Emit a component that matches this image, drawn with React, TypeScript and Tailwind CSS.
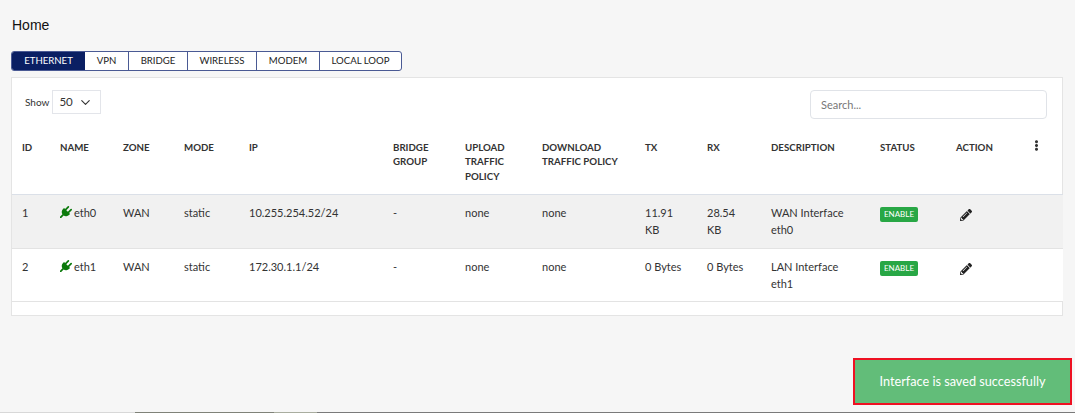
import React from "react";
import { FaPencilAlt, FaEllipsisV } from "react-icons/fa";
import { ChevronDown } from "lucide-react";

const tabs = ["ETHERNET", "VPN", "BRIDGE", "WIRELESS", "MODEM", "LOCAL LOOP"];
const tabW = ["w-[73px]", "w-[44px]", "w-[59px]", "w-[69px]", "w-[63px]", "w-[81px]"];
const headers = [
  ["ID", "w-[38px]"],
  ["NAME", "w-[63px]"],
  ["ZONE", "w-[61px]"],
  ["MODE", "w-[65px]"],
  ["IP", "w-[144px]"],
  ["BRIDGE GROUP", "w-[72px]"],
  ["UPLOAD TRAFFIC POLICY", "w-[77px]"],
  ["DOWNLOAD TRAFFIC POLICY", "w-[103px]"],
  ["TX", "w-[62px]"],
  ["RX", "w-[64px]"],
  ["DESCRIPTION", "w-[109px]"],
  ["STATUS", "w-[76px]"],
  ["ACTION", "w-[78px]"],
  ["", "w-[39px]"],
];
const rows = [
  { id: "1", name: "eth0", ip: "10.255.254.52/24", tx: "11.91 KB", rx: "28.54 KB", desc: "WAN Interface eth0", bg: "bg-[#f1f1f1]", h: "h-[54px]" },
  { id: "2", name: "eth1", ip: "172.30.1.1/24", tx: "0 Bytes", rx: "0 Bytes", desc: "LAN Interface eth1", bg: "bg-white", h: "h-[53px]" },
];

function Plug() {
  return (
    <svg viewBox="0 0 1792 1792" className="h-[12px] w-[12px] shrink-0 fill-[#0b7a0b]">
      <path d="M1755 453q37 38 37 90.5t-37 90.5l-401 400 150 150-160 160q-163 163-389.5 186.5t-411.5-100.5l-362 362h-181v-181l362-362q-124-185-100.5-411.5t186.5-389.5l160-160 150 150 400-401q38-37 91-37t90 37 37 90.5-37 90.5l-400 401 234 234 401-400q38-37 91-37t90 37z" />
    </svg>
  );
}

export default function App() {
  return (
    <div className="relative flex h-[413px] w-[1075px] flex-col overflow-hidden bg-[#f6f6f6] font-['Lato','Noto_Sans',sans-serif] text-[11px] text-[#333]">
      <div className="flex-1">
        <div className="pl-[11px] pt-[17px]">
          <h1 className="h-[34px] pl-[1px] font-['Liberation_Sans',sans-serif] text-[14px] leading-[17px] text-[#111]">Home</h1>
          <div className="flex h-[20px] w-[391px] overflow-hidden rounded-[3px] border border-[#4a5a94] bg-white">
            {tabs.map((t, i) => (
              <div
                key={t}
                className={`flex items-center justify-center text-[9.6px] ${tabW[i]} ${i === 0 ? "bg-[#0a1f63] text-white" : "text-[#222]"} ${i > 0 && i < 5 ? "border-r border-[#4a5a94]" : ""}`}
              >
                {t}
              </div>
            ))}
          </div>
        </div>
        <div className="ml-[11px] mt-[6px] h-[239px] w-[1052px] border border-[#e4e4e4] bg-white">
          <div className="flex h-[55px] items-start justify-between pl-[13px] pr-[15px] pt-[12px]">
            <div className="flex items-center gap-[3px] text-[10px] text-[#333]">
              <span className="pt-[1px]">Show</span>
              <div className="flex h-[24px] w-[49px] items-center justify-between border border-[#e3e5ea] pl-[6px] pr-[7px]">
                <span className="text-[11.5px]">50</span>
                <ChevronDown size={15} strokeWidth={1.8} />
              </div>
            </div>
            <div className="flex h-[29px] w-[237px] items-center rounded-[4px] border border-[#e0e3e8] px-[10px] pt-[1px] text-[11px] text-[#777]">
              Search...
            </div>
          </div>
          <table className="w-[1050px] table-fixed border-collapse">
            <thead>
              <tr className="h-[61px] border-b border-[#dbe0e8]">
                {headers.map(([h, w], i) => (
                  <th key={i} className={`${w} pb-[8px] pr-[2px] pt-[7px] text-left align-top text-[9.7px] font-bold leading-[14.3px] text-[#333] ${i === 13 ? "pl-[7px]" : "pl-[10px]"}`}>
                    {i === 13 ? <FaEllipsisV size={11} /> : h}
                  </th>
                ))}
              </tr>
            </thead>
            <tbody>
              {rows.map((r) => (
                <tr key={r.id} className={`${r.h} border-b border-[#e3e3e3] ${r.bg}`}>
                  <td className="pl-[10px] pt-[9px] align-top leading-[17px]">{r.id}</td>
                  <td className="pl-[10px] pt-[9px] align-top leading-[17px]">
                    <span className="flex items-center gap-[2px]">
                      <Plug />
                      {r.name}
                    </span>
                  </td>
                  <td className="pl-[10px] pt-[9px] align-top leading-[17px]">WAN</td>
                  <td className="pl-[10px] pt-[9px] align-top leading-[17px]">static</td>
                  <td className="pl-[10px] pt-[9px] align-top leading-[17px]">{r.ip}</td>
                  <td className="pl-[10px] pt-[9px] align-top leading-[17px]">-</td>
                  <td className="pl-[10px] pt-[9px] align-top leading-[17px]">none</td>
                  <td className="pl-[10px] pt-[9px] align-top leading-[17px]">none</td>
                  <td className="pl-[10px] pr-[8px] pt-[9px] align-top leading-[17px]">{r.tx}</td>
                  <td className="pl-[10px] pr-[14px] pt-[9px] align-top leading-[17px]">{r.rx}</td>
                  <td className="pl-[10px] pr-[14px] pt-[9px] align-top leading-[17px]">{r.desc}</td>
                  <td className="pl-[10px] pt-[12px] align-top">
                    <span className="flex h-[15px] w-[38px] items-center justify-center rounded-[2px] bg-[#28a745] text-[8px] text-white">ENABLE</span>
                  </td>
                  <td className="pl-[14px] pt-[14px] align-top">
                    <FaPencilAlt size={12} className="text-[#222]" />
                  </td>
                  <td />
                </tr>
              ))}
            </tbody>
          </table>
        </div>
      </div>
      <div className="flex h-[1px] shrink-0">
        <div className="w-[135px] bg-[#d8d8d8]" />
        <div className="w-[139px] bg-[#7f8278]" />
        <div className="w-[43px] bg-[#a9ad9f]" />
        <div className="flex-1 bg-[#7a7a7a]" />
      </div>
      <div className="absolute left-[853px] top-[358px] flex h-[47px] w-[219px] items-center justify-center border-[2px] border-[#ee1122] bg-[#62bd79] text-[12.7px] text-white">
        Interface is saved successfully
      </div>
    </div>
  );
}
